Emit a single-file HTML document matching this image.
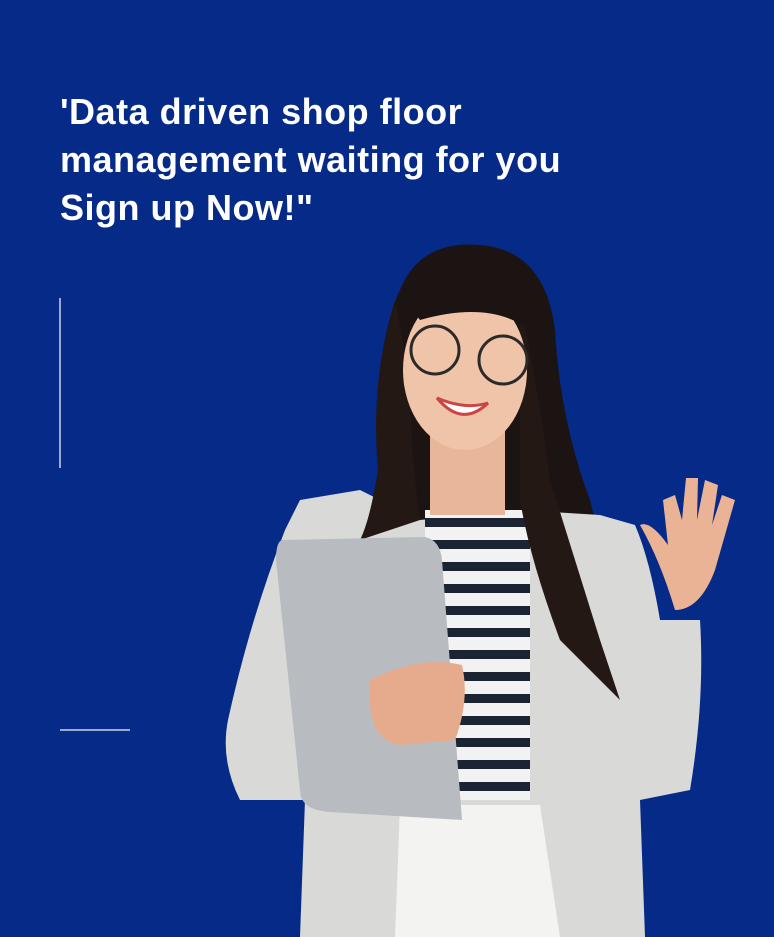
<!DOCTYPE html>
<html><head><meta charset="utf-8"><style>
html,body{margin:0;padding:0}
body{width:774px;height:937px;background:#062a87;position:relative;overflow:hidden;font-family:"Liberation Sans",sans-serif}
h1{position:absolute;left:60px;top:88px;margin:0;color:#fff;font-size:36px;line-height:48px;font-weight:bold;letter-spacing:0.5px;white-space:nowrap}
.vl{position:absolute;left:59px;top:298px;width:2px;height:170px;background:#9aa8d4}
.hl{position:absolute;left:60px;top:729px;width:70px;height:2px;background:#9aa8d4}
svg{position:absolute;left:0;top:0}
</style></head><body>
<h1>'Data driven shop floor<br>management waiting for you<br>Sign up Now!"</h1>
<div class="vl"></div><div class="hl"></div>
<svg width="774" height="937" viewBox="0 0 774 937">
<path d="M400 290 Q420 240 480 245 Q545 250 555 330 Q560 420 590 500 Q610 580 630 700 L600 720 L520 640 L420 560 L360 540 Q385 470 385 400 Q385 320 400 290Z" fill="#1c1412"/>
<path d="M300 500 L360 490 L420 520 L520 510 L600 515 L635 525 Q650 560 660 620 L700 620 Q705 700 690 790 L640 800 L645 937 L300 937 L305 800 L240 800 Q220 760 228 720 Q250 620 285 530Z" fill="#d9d9d7"/>
<rect x="425" y="510" width="105" height="290" fill="#f2f2f2"/>
<g fill="#1b2433">
<rect x="425" y="518" width="105" height="9"/><rect x="425" y="540" width="105" height="9"/><rect x="425" y="562" width="105" height="9"/><rect x="425" y="584" width="105" height="9"/><rect x="425" y="606" width="105" height="9"/><rect x="425" y="628" width="105" height="9"/><rect x="425" y="650" width="105" height="9"/><rect x="425" y="672" width="105" height="9"/><rect x="425" y="694" width="105" height="9"/><rect x="425" y="716" width="105" height="9"/><rect x="425" y="738" width="105" height="9"/><rect x="425" y="760" width="105" height="9"/><rect x="425" y="782" width="105" height="9"/>
</g>
<path d="M400 805 L540 805 L560 937 L395 937Z" fill="#f3f3f1"/>
<path d="M395 300 Q370 380 378 470 Q370 520 360 540 L420 520 Q410 450 410 380Z" fill="#241814"/>
<path d="M520 300 Q540 400 550 480 Q575 560 600 640 L620 700 L560 640 Q530 560 520 500Z" fill="#241814"/>
<rect x="430" y="420" width="75" height="95" fill="#e8b79a"/>
<ellipse cx="465" cy="370" rx="62" ry="80" fill="#f0c4a8"/>
<path d="M405 300 Q440 250 500 270 Q530 290 530 330 Q490 300 420 320Z" fill="#1c1412"/>
<circle cx="435" cy="350" r="24" fill="none" stroke="#2a2a2a" stroke-width="3"/>
<circle cx="503" cy="360" r="24" fill="none" stroke="#2a2a2a" stroke-width="3"/>
<path d="M437 398 Q462 428 488 403 Q465 410 437 398Z" fill="#fff" stroke="#c44" stroke-width="3"/>
<path d="M282 540 L425 537 Q440 540 442 560 L462 820 L330 812 Q300 810 300 790 L276 560 Q276 542 282 540Z" fill="#b8bcc0"/>
<path d="M370 680 Q420 655 462 665 Q470 700 455 740 L400 745 Q365 740 370 680Z" fill="#e5ab8c"/>
<path d="M640 525 Q660 560 675 610 Q700 610 715 570 L735 500 L722 495 L712 525 L718 485 L705 480 L697 520 L698 478 L686 478 L682 520 L675 495 L663 500 L668 545 Q650 520 640 525Z" fill="#eab396"/>
</svg>
</body></html>
